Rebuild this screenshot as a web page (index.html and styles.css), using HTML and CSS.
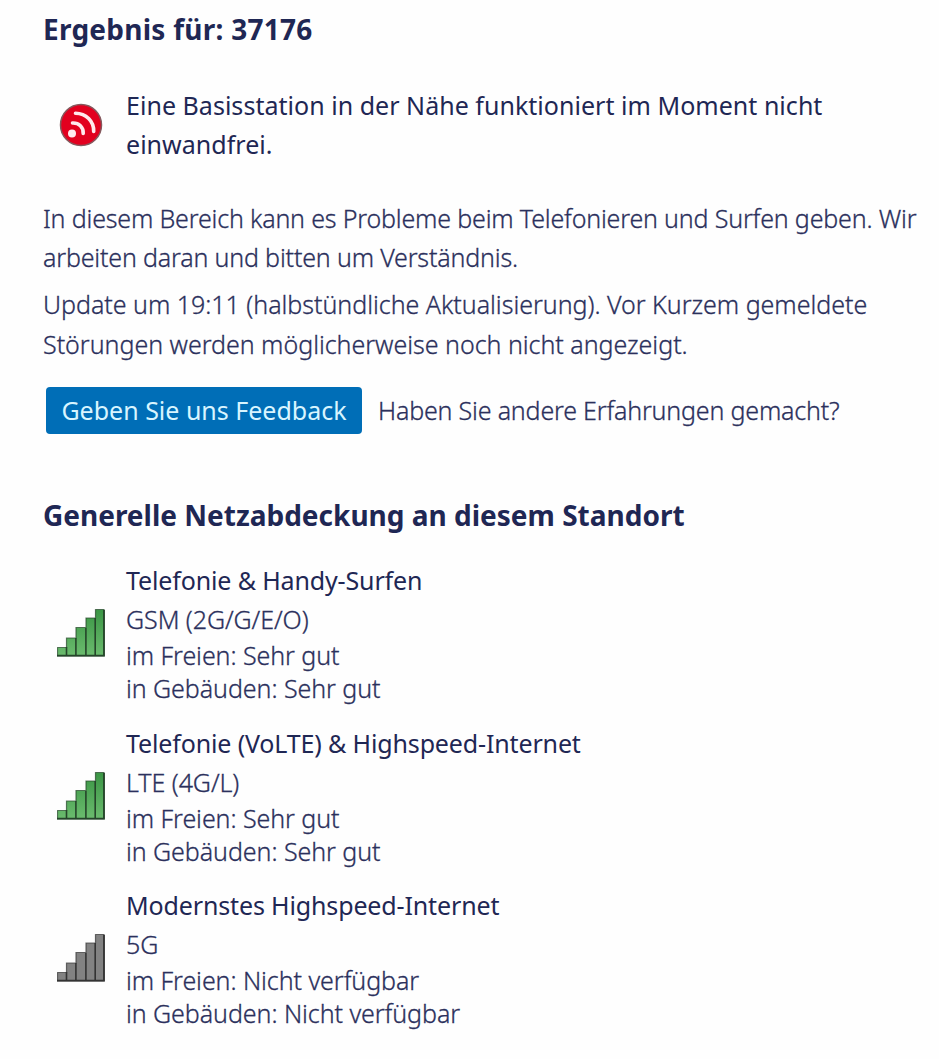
FILE: index.html
```html
<!DOCTYPE html>
<html lang="de">
<head>
    <meta charset="UTF-8">
    <meta name="viewport" content="width=device-width, initial-scale=1.0">
    <title>Netzabdeckung</title>
    <link rel="stylesheet" href="styles.css">
</head>
<body>
    <svg class="defs" width="0" height="0">
        <defs>
            <linearGradient id="green" x1="0" y1="0" x2="0" y2="48" gradientUnits="userSpaceOnUse">
                <stop offset="0" stop-color="#3a9544"/>
                <stop offset="1" stop-color="#6cbc6f"/>
            </linearGradient>
            <symbol id="bars" viewBox="0 0 48 48">
                <path d="M0.500 38.500h9V29h9.500V18.500h10V9h9.500V0.500h8.500V47h-46.500z" stroke="currentColor" stroke-opacity="0.7" stroke-width="1.200"/>
                <path d="M9.500 38v9M18.900 29v18M28.900 19v28M38.200 9v38" stroke="currentColor" stroke-width="1.600"/>
                <path d="M0 46.700h47V1" stroke="currentColor" stroke-width="1.800" fill="none"/>
            </symbol>
        </defs>
    </svg>
    <div class="container">
        <h2 class="result-title">Ergebnis für: 37176</h2>
        <div class="status">
            <svg class="status-icon" viewBox="0 0 44 44">
                <circle cx="22" cy="22" r="20.500" fill="#e2001f" stroke="#85585d" stroke-width="1.500"/>
                <g fill="none" stroke="#ffe9ee" stroke-width="3.600" stroke-linecap="round">
                    <path d="M13.500 20c6.500-.3 11 4.200 10.700 10.500"/>
                    <path d="M16.500 10.200C27 10.300 35 18 34.700 28.500"/>
                </g>
                <circle cx="13" cy="30.500" r="4" fill="#ffe9ee"/>
            </svg>
            <p>Eine Basisstation in der Nähe funktioniert im Moment nicht<br>einwandfrei.</p>
        </div>
        <p class="info">In diesem Bereich kann es Probleme beim Telefonieren und Surfen geben. Wir<br>arbeiten daran und bitten um Verständnis.</p>
        <p class="info update">Update um 19:11 (halbstündliche Aktualisierung). Vor Kurzem gemeldete<br>Störungen werden möglicherweise noch nicht angezeigt.</p>
        <div class="feedback">
            <button class="button">Geben Sie uns Feedback</button>
            <span>Haben Sie andere Erfahrungen gemacht?</span>
        </div>
        <h2 class="coverage-title">Generelle Netzabdeckung an diesem Standort</h2>
        <div class="coverage">
            <svg class="signal good"><use href="#bars"/></svg>
            <div class="details">
                <h3>Telefonie &amp; Handy-Surfen</h3>
                <p class="tech">GSM (2G/G/E/O)</p>
                <p>im Freien: Sehr gut</p>
                <p>in Gebäuden: Sehr gut</p>
            </div>
        </div>
        <div class="coverage">
            <svg class="signal good"><use href="#bars"/></svg>
            <div class="details">
                <h3>Telefonie (VoLTE) &amp; Highspeed-Internet</h3>
                <p class="tech">LTE (4G/L)</p>
                <p>im Freien: Sehr gut</p>
                <p>in Gebäuden: Sehr gut</p>
            </div>
        </div>
        <div class="coverage">
            <svg class="signal none"><use href="#bars"/></svg>
            <div class="details">
                <h3>Modernstes Highspeed-Internet</h3>
                <p class="tech">5G</p>
                <p>im Freien: Nicht verfügbar</p>
                <p>in Gebäuden: Nicht verfügbar</p>
            </div>
        </div>
    </div>
</body>
</html>
```
FILE: styles.css
```css
body {
    font-family: "Noto Sans", "Open Sans", sans-serif;
    font-size: 25px;
    line-height: 39px;
    margin: 0;
    background-color: #fefefe;
    color: #2b305c;
}
.defs {
    display: block;
}
.container {
    padding: 9px 0 0 43px;
    white-space: nowrap;
}
h2, h3, p {
    margin: 0;
}
h2 {
    font-size: 28px;
    line-height: 40px;
    font-weight: 700;
    color: #1f2754;
}
.result-title {
    letter-spacing: 0.25px;
}
.status {
    display: flex;
    margin-top: 37px;
    color: #1f2754;
}
.status p {
    letter-spacing: 0.03px;
}
.status-icon {
    width: 44px;
    height: 44px;
    margin: 17px 23px 0 16px;
}
.info {
    margin-top: 35px;
    font-weight: 300;
    letter-spacing: -0.17px;
    -webkit-text-stroke: 0.3px;
}
.info.update {
    margin-top: 7px;
    line-height: 40px;
    letter-spacing: -0.02px;
}
.feedback {
    display: flex;
    align-items: center;
    gap: 16px;
    margin: 23px 0 0 3px;
    font-weight: 300;
}
.feedback span {
    letter-spacing: -0.18px;
    -webkit-text-stroke: 0.3px;
}
.button {
    width: 316px;
    height: 47px;
    padding: 0;
    border: none;
    border-radius: 4px;
    background-color: #006eb7;
    color: #d8f5ff;
    font: inherit;
    font-weight: 400;
    cursor: pointer;
}
.coverage-title {
    margin-top: 61px;
}
.coverage {
    display: flex;
    height: 162.5px;
}
.coverage-title + .coverage {
    margin-top: 25px;
}
.signal {
    width: 48px;
    height: 48px;
    margin: 49px 21px 0 14px;
}
.good {
    fill: url(#green);
    color: #25452a;
}
.none {
    fill: #828282;
    color: #333;
}
.details {
    font-weight: 300;
    line-height: 33px;
    letter-spacing: -0.06px;
    -webkit-text-stroke: 0.3px;
}
.details h3 {
    font-size: 25px;
    font-weight: 400;
    line-height: 40px;
    letter-spacing: -0.14px;
    color: #1f2754;
    -webkit-text-stroke: 0;
}
.details .tech {
    line-height: 39px;
}
```
